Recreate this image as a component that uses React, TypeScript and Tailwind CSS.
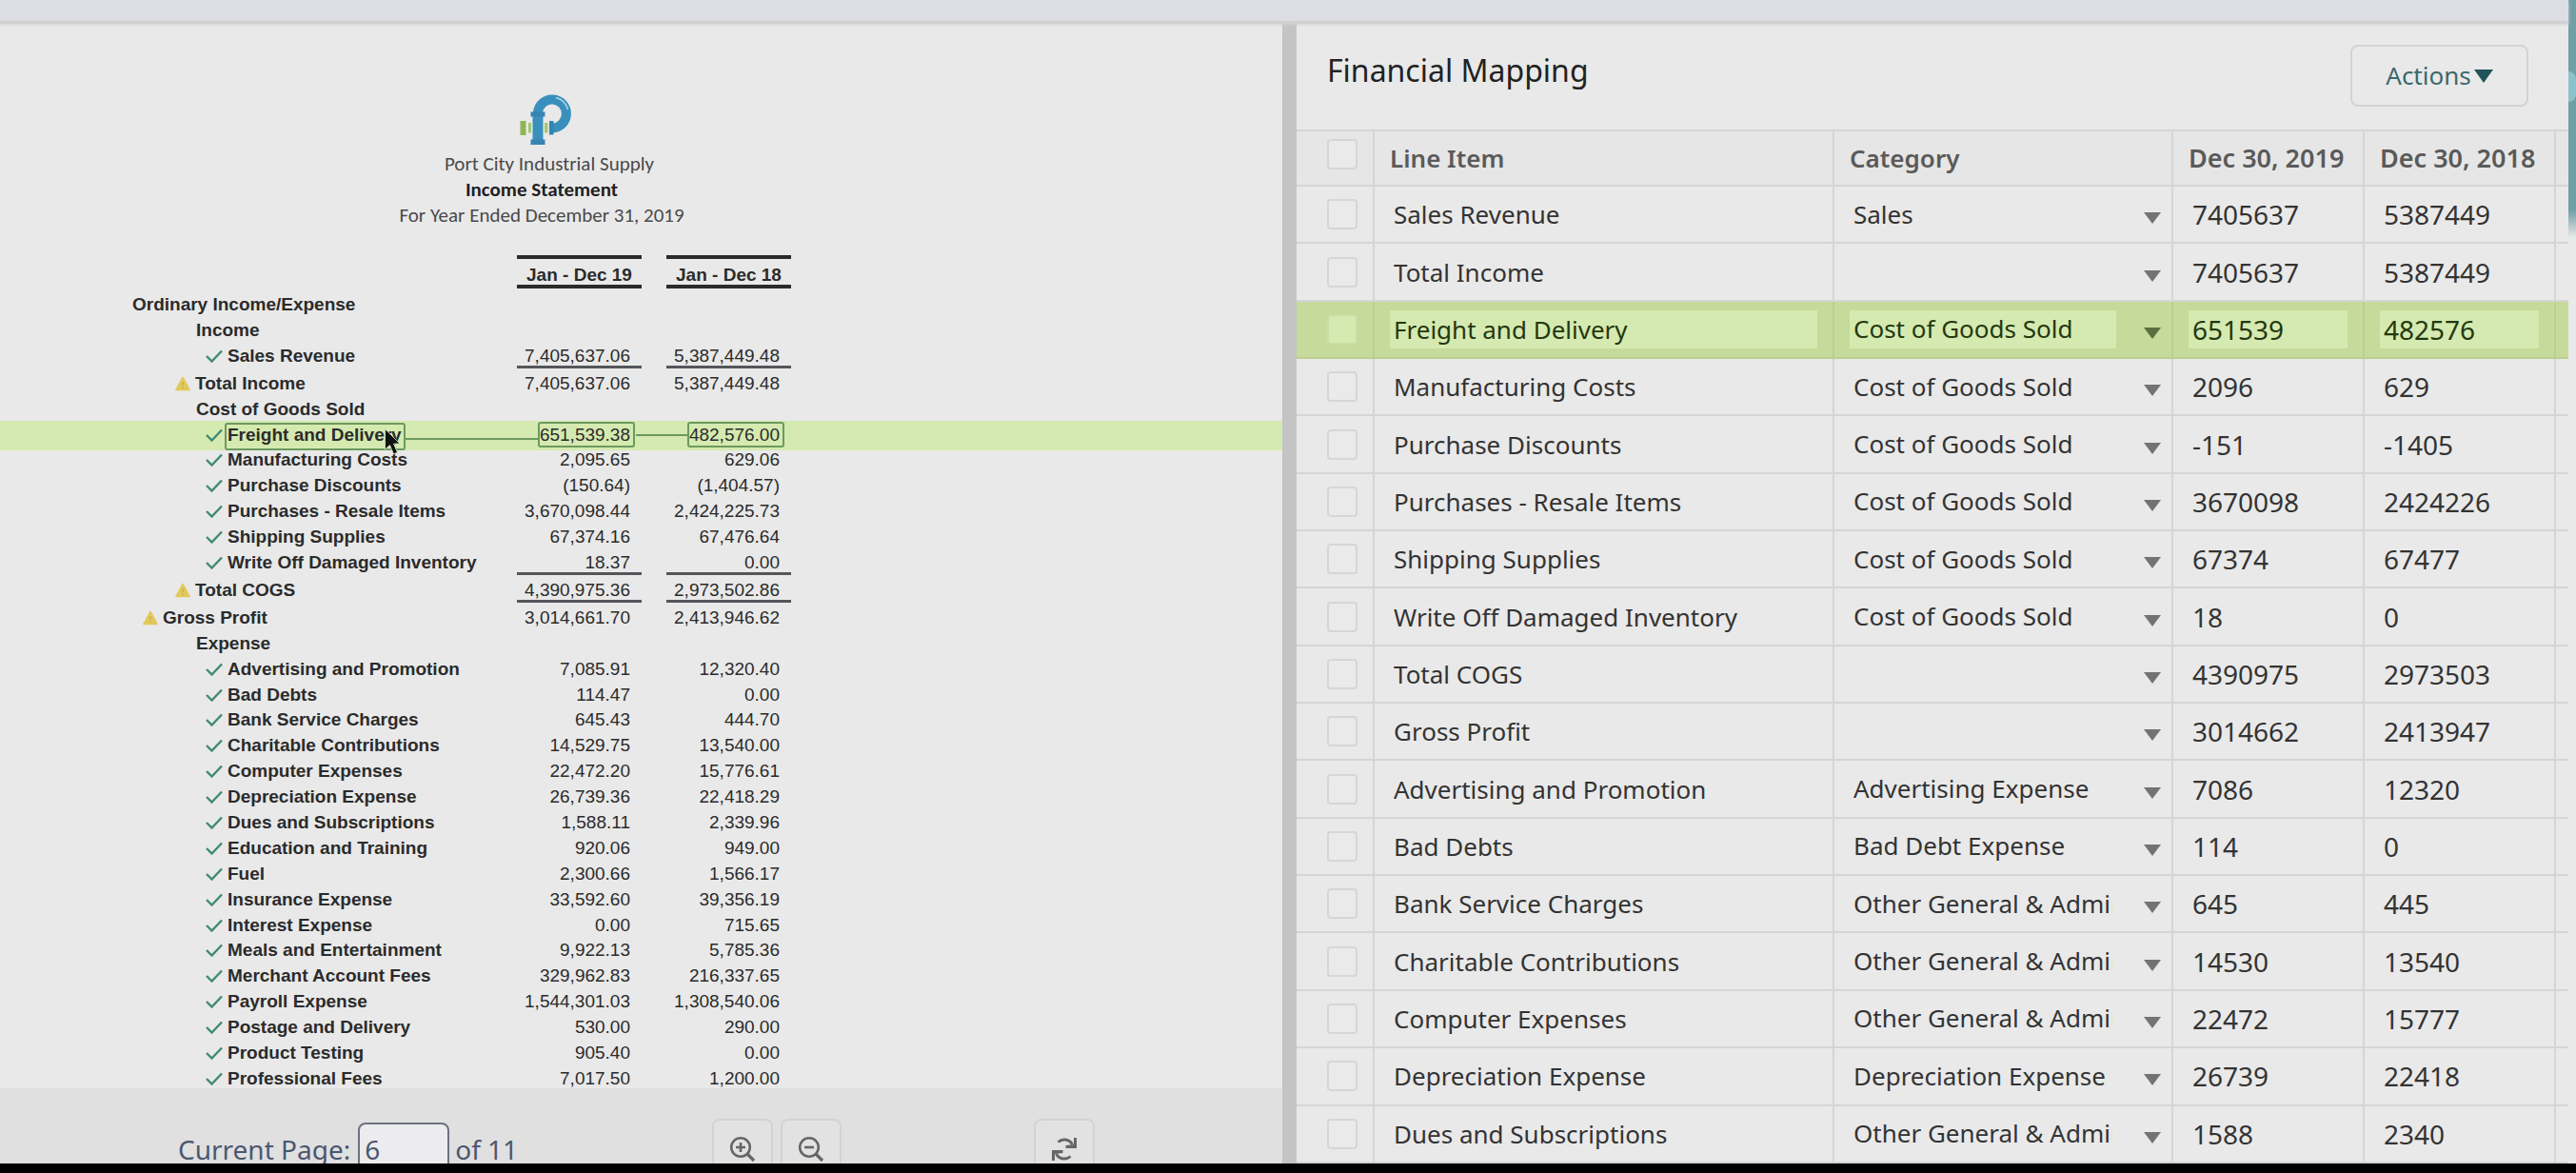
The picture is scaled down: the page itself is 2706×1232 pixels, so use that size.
import React from "react";

type Mark = "check" | "warn" | null;

interface StatementLine {
  label: string;
  indent: 0 | 1 | 2 | 3;
  mark?: Mark;
  a?: string;
  b?: string;
  rule?: boolean;
  active?: boolean;
}

const statement: StatementLine[] = [
  { label: "Ordinary Income/Expense", indent: 0 },
  { label: "Income", indent: 2 },
  { label: "Sales Revenue", indent: 3, mark: "check", a: "7,405,637.06", b: "5,387,449.48", rule: true },
  { label: "Total Income", indent: 2, mark: "warn", a: "7,405,637.06", b: "5,387,449.48" },
  { label: "Cost of Goods Sold", indent: 2 },
  { label: "Freight and Delivery", indent: 3, mark: "check", a: "651,539.38", b: "482,576.00", active: true },
  { label: "Manufacturing Costs", indent: 3, mark: "check", a: "2,095.65", b: "629.06" },
  { label: "Purchase Discounts", indent: 3, mark: "check", a: "(150.64)", b: "(1,404.57)" },
  { label: "Purchases - Resale Items", indent: 3, mark: "check", a: "3,670,098.44", b: "2,424,225.73" },
  { label: "Shipping Supplies", indent: 3, mark: "check", a: "67,374.16", b: "67,476.64" },
  { label: "Write Off Damaged Inventory", indent: 3, mark: "check", a: "18.37", b: "0.00", rule: true },
  { label: "Total COGS", indent: 2, mark: "warn", a: "4,390,975.36", b: "2,973,502.86", rule: true },
  { label: "Gross Profit", indent: 1, mark: "warn", a: "3,014,661.70", b: "2,413,946.62" },
  { label: "Expense", indent: 2 },
  { label: "Advertising and Promotion", indent: 3, mark: "check", a: "7,085.91", b: "12,320.40" },
  { label: "Bad Debts", indent: 3, mark: "check", a: "114.47", b: "0.00" },
  { label: "Bank Service Charges", indent: 3, mark: "check", a: "645.43", b: "444.70" },
  { label: "Charitable Contributions", indent: 3, mark: "check", a: "14,529.75", b: "13,540.00" },
  { label: "Computer Expenses", indent: 3, mark: "check", a: "22,472.20", b: "15,776.61" },
  { label: "Depreciation Expense", indent: 3, mark: "check", a: "26,739.36", b: "22,418.29" },
  { label: "Dues and Subscriptions", indent: 3, mark: "check", a: "1,588.11", b: "2,339.96" },
  { label: "Education and Training", indent: 3, mark: "check", a: "920.06", b: "949.00" },
  { label: "Fuel", indent: 3, mark: "check", a: "2,300.66", b: "1,566.17" },
  { label: "Insurance Expense", indent: 3, mark: "check", a: "33,592.60", b: "39,356.19" },
  { label: "Interest Expense", indent: 3, mark: "check", a: "0.00", b: "715.65" },
  { label: "Meals and Entertainment", indent: 3, mark: "check", a: "9,922.13", b: "5,785.36" },
  { label: "Merchant Account Fees", indent: 3, mark: "check", a: "329,962.83", b: "216,337.65" },
  { label: "Payroll Expense", indent: 3, mark: "check", a: "1,544,301.03", b: "1,308,540.06" },
  { label: "Postage and Delivery", indent: 3, mark: "check", a: "530.00", b: "290.00" },
  { label: "Product Testing", indent: 3, mark: "check", a: "905.40", b: "0.00" },
  { label: "Professional Fees", indent: 3, mark: "check", a: "7,017.50", b: "1,200.00" },
];

const GENERAL = "Other General & Administrative";
const COGS = "Cost of Goods Sold";

const mapping: [string, string, string, string][] = [
  ["Sales Revenue", "Sales", "7405637", "5387449"],
  ["Total Income", "", "7405637", "5387449"],
  ["Freight and Delivery", COGS, "651539", "482576"],
  ["Manufacturing Costs", COGS, "2096", "629"],
  ["Purchase Discounts", COGS, "-151", "-1405"],
  ["Purchases - Resale Items", COGS, "3670098", "2424226"],
  ["Shipping Supplies", COGS, "67374", "67477"],
  ["Write Off Damaged Inventory", COGS, "18", "0"],
  ["Total COGS", "", "4390975", "2973503"],
  ["Gross Profit", "", "3014662", "2413947"],
  ["Advertising and Promotion", "Advertising Expense", "7086", "12320"],
  ["Bad Debts", "Bad Debt Expense", "114", "0"],
  ["Bank Service Charges", GENERAL, "645", "445"],
  ["Charitable Contributions", GENERAL, "14530", "13540"],
  ["Computer Expenses", GENERAL, "22472", "15777"],
  ["Depreciation Expense", "Depreciation Expense", "26739", "22418"],
  ["Dues and Subscriptions", GENERAL, "1588", "2340"],
];

const indentClass = ["pl-[139px]", "pl-[150px]", "pl-[184px]", "pl-[216px]"];

function Logo() {
  return (
    <svg viewBox="6 6 56 56" className="h-14 w-14" aria-label="Port City Industrial Supply logo">
      <path d="M26 31V27A15 15 0 1 1 41 43.500" fill="none" stroke="#3a8fbc" strokeWidth="10" />
      <path d="M20.500 31H31.500V56H20.500Z" fill="#3a8fbc" />
      <path d="M18.500 26.500H33.500V31.500H18.500Z" fill="#3485b2" />
      <path d="M18.500 55.500H33.500V61H18.500Z" fill="#3485b2" />
      <path d="M38 36H42.500V50.500H38Z" fill="#3485b2" />
      <path d="M45 11.500A17.500 17.500 0 0 1 57.500 24" fill="none" stroke="#a8d6ea" strokeWidth="1.600" />
      <path d="M7.500 36H13.500V51H7.500Z" fill="#8fb653" />
      <path d="M16 38H19V48.500H16ZM33 38H36.500V48.500H33Z" fill="#a5c577" />
    </svg>
  );
}

function Check() {
  return (
    <svg viewBox="0 0 18 14" className="h-[14px] w-[18px] shrink-0" aria-hidden="true">
      <path d="M1 7L6.500 12.500L17 1.500" fill="none" stroke="#3f8a76" strokeWidth="2.400" />
    </svg>
  );
}

function Warn() {
  return (
    <svg viewBox="0 0 16 16" className="h-4 w-4 shrink-0" aria-hidden="true">
      <path d="M8 1.500L15 14.500H1Z" fill="#e2c95c" stroke="#e2c95c" strokeWidth="1.600" strokeLinejoin="round" />
      <path d="M8 6V10M8 11.500V13" stroke="#cbb04a" strokeWidth="1.500" />
    </svg>
  );
}

function Caret({ className }: { className: string }) {
  return (
    <svg viewBox="0 0 18 12" preserveAspectRatio="none" className={className} aria-hidden="true">
      <path d="M0 0H18L9 12Z" fill="currentColor" />
    </svg>
  );
}

function Cursor() {
  return (
    <svg viewBox="0 0 18 30" className="absolute left-[166px] top-[5px] z-10 h-[30px] w-[18px]" aria-hidden="true">
      <path d="M1.500 1.500V23L6.500 18.500L10.500 28L14.500 26.200L10.500 17H17Z" fill="#111" stroke="#d9ecc0" strokeWidth="0.800" />
    </svg>
  );
}

function ZoomIcon({ plus }: { plus?: boolean }) {
  return (
    <svg viewBox="0 0 28 28" className="h-7 w-7" aria-hidden="true" fill="none" stroke="#666" strokeWidth="2.600">
      <circle cx="12" cy="12" r="9.800" />
      <path d="M19 19L26 26" strokeWidth="3.200" />
      <path d={plus ? "M7 12H17M12 7V17" : "M7 12H17"} />
    </svg>
  );
}

function RefreshIcon() {
  return (
    <svg viewBox="0 0 28 28" className="h-7 w-7" aria-hidden="true">
      <path d="M7.500 6.500C12 2.500 19 3 22.500 9" fill="none" stroke="#666" strokeWidth="3" />
      <path d="M27 2V13H15.500V10L24 9V2Z" fill="#666" />
      <path d="M20.500 21.500C16 25.500 9 25 5.500 19" fill="none" stroke="#666" strokeWidth="3" />
      <path d="M1 26V15H12.500V18L4 19V26Z" fill="#666" />
    </svg>
  );
}

function Amount({ value, line, first }: { value?: string; line: StatementLine; first?: boolean }) {
  return (
    <td className="p-0 align-top">
      <div
        className={
          "relative h-[26px] pr-3 text-right leading-[26px] " +
          (line.rule ? "border-b-3 border-[#54565a]" : "")
        }
      >
        {value}
        {line.active && (
          <span className="absolute -top-px right-[7px] h-[27px] w-[102px] rounded-[3px] border-2 border-[#6c9a5e]" />
        )}
        {line.active && !first && (
          <span className="absolute right-[109px] top-3 h-[2px] w-[54px] bg-[#6c9a5e]" />
        )}
      </div>
    </td>
  );
}

function Statement() {
  return (
    <div className="flex min-h-0 flex-1 flex-col bg-[#e9e9e9] text-[19px] text-[#2b2b2b]">
      <header className="flex flex-col pb-7 pt-[72px] text-[21px] leading-[27px] text-[#4a4a4a] [font-family:Carlito,Lato,sans-serif]">
        <div className="flex w-[1138px] flex-col items-center">
          <div className="pb-[6px] pl-2">
            <Logo />
          </div>
          <p className="pl-4">Port City Industrial Supply</p>
          <h1 className="font-bold text-[#1f1f1f]">Income Statement</h1>
          <p>For Year Ended December 31, 2019</p>
        </div>
      </header>
      <div className="-mb-1 min-h-0 flex-1">
        <table className="isolate h-full w-full table-fixed border-collapse [font-family:'Liberation_Sans',Arial,sans-serif]">
          <colgroup>
            <col className="w-[543px]" />
            <col className="w-[131px]" />
            <col className="w-[26px]" />
            <col className="w-[131px]" />
            <col />
          </colgroup>
          <thead>
            <tr className="h-[39px]">
              <th className="p-0" />
              <th className="p-0 align-top">
                <div className="border-y-4 border-[#2b2b2b] pt-[6px] leading-[21px]">Jan - Dec 19</div>
              </th>
              <th className="p-0" />
              <th className="p-0 align-top">
                <div className="border-y-4 border-[#2b2b2b] pt-[6px] leading-[21px]">Jan - Dec 18</div>
              </th>
              <th className="p-0" />
            </tr>
          </thead>
          <tbody>
            {statement.map((line) => (
              <tr key={line.label} className={"relative " + (line.rule ? "h-[28px]" : "h-[26px]")}>
                <th scope="row" className="p-0 text-left align-top font-bold">
                  {line.active && <span className="absolute inset-x-0 -bottom-[3px] -top-[2px] -z-10 bg-[#d5eab0]" />}
                  <div
                    className={
                      "flex h-[26px] items-center gap-[5px] whitespace-nowrap leading-[26px] " +
                      (line.mark ? indentClass[line.indent] : line.indent === 0 ? "pl-[139px]" : "pl-[206px]")
                    }
                  >
                    {line.mark === "check" && <Check />}
                    {line.mark === "warn" && <Warn />}
                    {line.active ? (
                      <span className="relative -ml-[2px] flex-1">
                        <span className="pl-[2px]">{line.label}</span>
                        <span className="absolute -left-px top-0 h-[29px] w-[190px] rounded-[3px] border-2 border-[#6c9a5e]" />
                        <span className="absolute -right-[22px] left-[188px] top-4 h-[2px] bg-[#6c9a5e]" />
                        <Cursor />
                      </span>
                    ) : (
                      <span>{line.label}</span>
                    )}
                  </div>
                </th>
                <Amount value={line.a} line={line} first />
                <td className="p-0" />
                <Amount value={line.b} line={line} />
                <td className="p-0" />
              </tr>
            ))}
          </tbody>
        </table>
      </div>
    </div>
  );
}

const toolButton =
  "flex h-16 w-16 items-center justify-center rounded-lg border-2 border-[#d3d3d3] bg-[#e2e2e2]";

function PageBar() {
  return (
    <footer className="h-[79px] shrink-0 overflow-hidden bg-[#e0e0e0] pt-8">
      <div className="flex h-16 items-center pl-[187px] text-[28px] text-[#4b5770]">
        <label htmlFor="page">Current Page:</label>
        <input
          id="page"
          defaultValue="6"
          className="ml-2 h-14 w-24 rounded-lg border-2 border-[#6d7280] bg-[#ececee] pl-[5px]"
        />
        <span className="ml-[6px] w-[270px]">of 11</span>
        <button type="button" aria-label="Zoom in" className={toolButton}>
          <ZoomIcon plus />
        </button>
        <button type="button" aria-label="Zoom out" className={toolButton + " ml-2"}>
          <ZoomIcon />
        </button>
        <button type="button" aria-label="Refresh" className={toolButton + " ml-[202px]"}>
          <RefreshIcon />
        </button>
      </div>
    </footer>
  );
}

function Box({ label, on }: { label: string; on?: boolean }) {
  return (
    <input
      type="checkbox"
      aria-label={label}
      className={
        "block h-8 w-8 appearance-none rounded-[4px] border-2 " +
        (on ? "border-[#c9dea2] bg-[#d5eab0]" : "border-[#d6d6d6] bg-[#eaeaea]")
      }
    />
  );
}

const cell = "border-2 border-[#d5d5d5] p-0";

function Mapping() {
  return (
    <section className="flex min-h-0 flex-col overflow-hidden bg-[#e9e9e9]">
      <div className="flex h-[111px] shrink-0 items-start justify-between pl-8 pr-[42px] pt-[22px]">
        <h2 className="pt-[7px] text-[32px] leading-[40px] text-[#222]">Financial Mapping</h2>
        <button
          type="button"
          className="flex h-[65px] w-[187px] items-center justify-center gap-[3px] rounded-lg border-2 border-[#d3d3d3] text-[26px] text-[#3d686b]"
        >
          Actions
          <Caret className="h-[14px] w-[20px] text-[#1f5558]" />
        </button>
      </div>
      <div className="-mx-px min-h-0 flex-1">
        <table className="h-full w-full table-fixed border-collapse text-[26px] text-[#333]">
          <colgroup>
            <col className="w-[82px]" />
            <col />
            <col className="w-[356px]" />
            <col className="w-[201px]" />
            <col className="w-[201px]" />
            <col className="w-[15px]" />
          </colgroup>
          <thead>
            <tr className="h-[58px] bg-[#e6e6e6] text-left text-[#5a5a5a]">
              <th className={cell + " border-l-0 pl-[33px] pt-2 align-top"}>
                <Box label="Select all" />
              </th>
              <th className={cell + " pl-4 font-semibold"}>Line Item</th>
              <th className={cell + " pl-4 font-semibold"}>Category</th>
              <th className={cell + " whitespace-nowrap pl-4 text-[27px] font-semibold"}>Dec 30, 2019</th>
              <th className={cell + " whitespace-nowrap pl-4 text-[27px] font-semibold"}>Dec 30, 2018</th>
              <th className={cell + " border-r-0"} />
            </tr>
          </thead>
          <tbody>
            {mapping.map(([item, category, y19, y18]) => {
              const on = item === "Freight and Delivery";
              const td = on ? "border-2 border-[#bccf93] p-0" : cell;
              const field =
                "block h-10 w-full px-1 text-clip " + (on ? "bg-[#d5eab0] text-[#24380f]" : "bg-transparent");
              return (
                <tr key={item} className={"h-[60px] " + (on ? "bg-[#c6da9b]" : "")}>
                  <td className={td + " border-l-0 pl-[33px]"}>
                    <Box label={"Select " + item} on={on} />
                  </td>
                  <td className={td + " pl-4 pr-4"}>
                    <input aria-label="Line item" defaultValue={item} className={field} />
                  </td>
                  <td className={td + " pl-4"}>
                    <div className="flex items-center">
                      <select
                        aria-label={"Category for " + item}
                        defaultValue={category}
                        className={field + " min-w-0 flex-1 appearance-none overflow-hidden"}
                      >
                        <option value={category}>{category}</option>
                      </select>
                      <Caret
                        className={
                          "ml-[29px] mr-[11px] mt-2 h-[12px] w-[18px] shrink-0 " +
                          (on ? "text-[#58703f]" : "text-[#737373]")
                        }
                      />
                    </div>
                  </td>
                  <td className={td + " pl-4 pr-4 text-[28px]"}>
                    <input aria-label="Dec 30, 2019" defaultValue={y19} className={field} />
                  </td>
                  <td className={td + " pl-4 pr-4 text-[28px]"}>
                    <input aria-label="Dec 30, 2018" defaultValue={y18} className={field} />
                  </td>
                  <td className={td + " border-r-0"} />
                </tr>
              );
            })}
          </tbody>
        </table>
      </div>
    </section>
  );
}

export default function App() {
  return (
    <div className="flex h-screen flex-col overflow-hidden bg-[#e9e9e9] [font-family:'Noto_Sans','Open_Sans',sans-serif]">
      <div className="flex min-h-0 flex-1">
        <div className="flex min-w-0 flex-1 flex-col">
          <div className="relative z-10 h-[25px] shrink-0 border-b-3 border-[#d0d0d2] bg-[#dddee3] shadow-[0_1px_3px_#d2d2d2]" />
          <main className="grid min-h-0 flex-1 grid-cols-[minmax(0,1347fr)_15px_minmax(0,1336fr)] grid-rows-[minmax(0,1fr)]">
            <section className="flex min-h-0 flex-col overflow-hidden">
              <Statement />
              <PageBar />
            </section>
            <div className="bg-[#c4c4c4]" />
            <Mapping />
          </main>
        </div>
        <aside className="w-2 shrink-0 overflow-hidden">
          <div className="flex h-[250px] flex-col items-center bg-linear-to-b from-[#709fa6] from-88% to-[#e9e9e9] pt-[75px]">
            <span className="h-8 w-2 rounded-r-full bg-[#8cc3cb]" />
          </div>
        </aside>
      </div>
      <div className="h-[10px] shrink-0 bg-black" />
    </div>
  );
}
